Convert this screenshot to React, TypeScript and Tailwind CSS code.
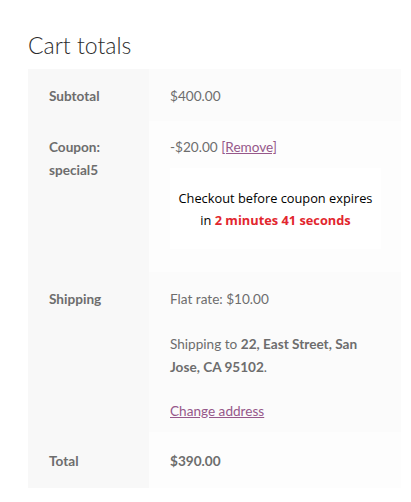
const rowBase = "flex";
const thCls =
  "w-[121px] shrink-0 bg-[#f8f8f8] pl-[21px] pr-2 font-bold text-[#6d6d6d]";

export default function App() {
  return (
    <div className="min-h-screen bg-white font-['Lato',sans-serif] text-[13.6px] leading-[23.5px] text-[#6d6d6d]">
      <div className="pl-[28px] pr-[10px] pt-[30px] pb-[15px]">
        <h2 className="text-[23px] font-light leading-[30px] text-[#2b2b2b]">
          Cart totals
        </h2>

        <div className="mt-[9px] w-[373px]">
          {/* Subtotal */}
          <div className={rowBase}>
            <div className={`${thCls} pt-[16px] pb-[12px]`}>Subtotal</div>
            <div className="flex-1 bg-[#fbfbfb] pl-[21px] pt-[16px] pb-[12px]">$400.00</div>
          </div>

          {/* Coupon */}
          <div className={rowBase}>
            <div className={`${thCls} pt-[15px]`}>
              Coupon:
              <br />
              special5
            </div>
            <div className="flex-1 bg-[#fdfdfd] pl-[21px] pr-[20px] pt-[15px] pb-[23px]">
              <div>
                -$20.00{" "}
                <a href="#" className="text-[#96588a] underline">
                  [Remove]
                </a>
              </div>
              <div className="mt-[9px] h-[81px] bg-white flex flex-col items-center justify-center text-center font-['Open_Sans',sans-serif] text-[12.8px] leading-[22px] text-black">
                <div>Checkout before coupon expires</div>
                <div>
                  in <span className="font-bold text-[#e2262e]">2 minutes 41 seconds</span>
                </div>
              </div>
            </div>
          </div>

          {/* Shipping */}
          <div className={rowBase}>
            <div className={`${thCls} pt-[16px]`}>Shipping</div>
            <div className="flex-1 bg-[#fbfbfb] pl-[21px] pr-[20px] pt-[16px] pb-[9px]">
              <div>Flat rate: $10.00</div>
              <p className="mt-[21px]">
                Shipping to <strong>22, East Street, San Jose, CA 95102</strong>.
              </p>
              <a href="#" className="mt-[20px] block w-fit text-[#96588a] underline">
                Change address
              </a>
            </div>
          </div>

          {/* Total */}
          <div className={rowBase}>
            <div className={`${thCls} pt-[18px] pb-[14px]`}>Total</div>
            <div className="flex-1 bg-[#fdfdfd] pl-[21px] pt-[18px] pb-[14px] font-bold">
              $390.00
            </div>
          </div>
        </div>
      </div>
    </div>
  );
}
